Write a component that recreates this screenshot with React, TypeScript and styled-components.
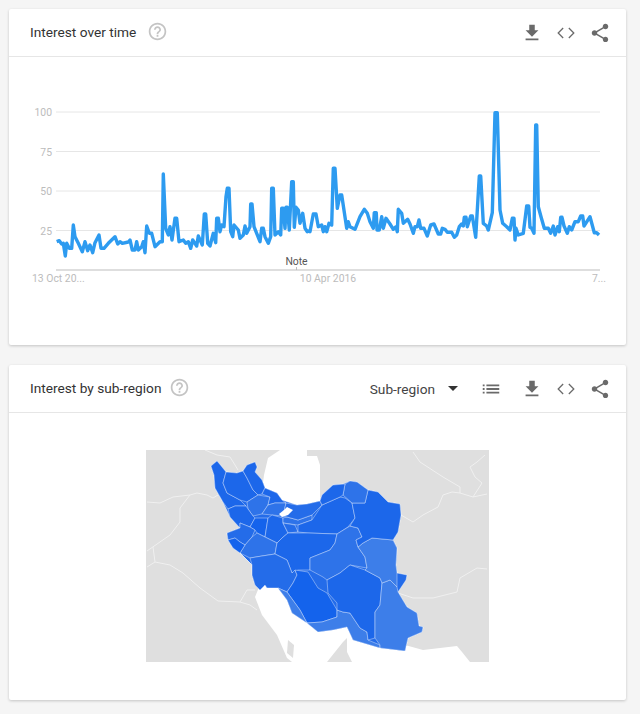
import React from 'react';
import styled, { createGlobalStyle } from 'styled-components';

const GlobalStyle = createGlobalStyle`
  html, body {
    margin: 0;
    background: #f5f5f5;
  }
  body {
    font-family: Roboto, "Liberation Sans", sans-serif;
  }
`;

const Page = styled.div`
  display: flex;
  flex-direction: column;
  gap: 20px;
  width: 617px;
  padding: 9px 14px 14px 9px;
`;

const Card = styled.section<{ $height: number }>`
  height: ${(p) => p.$height}px;
  display: flex;
  flex-direction: column;
  background: #fff;
  border-radius: 2px;
  box-shadow: 0 1px 3px rgba(0, 0, 0, 0.2);
`;

const Header = styled.header`
  flex: none;
  display: flex;
  align-items: center;
  height: 47px;
  padding: 0 9px 0 21px;
  border-bottom: 1px solid #e6e6e6;
`;

const Title = styled.h2`
  margin: 0 0 1px;
  font-size: 13.7px;
  font-weight: 400;
  color: #333;
`;

const Help = styled.svg<{ $gap: number }>`
  width: 21px;
  height: 21px;
  margin-left: ${(p) => p.$gap}px;
  margin-bottom: 2px;
  fill: #c4c4c4;
`;

const Actions = styled.div`
  margin-left: auto;
  display: flex;
  align-items: center;
`;

const Dropdown = styled.div`
  display: flex;
  align-items: center;
  gap: 13px;
  margin-right: 16px;
  font-size: 13.7px;
  color: #444;
`;

const Caret = styled.span`
  width: 0;
  height: 0;
  border-left: 5px solid transparent;
  border-right: 5px solid transparent;
  border-top: 5px solid #333;
`;

const IconButton = styled.button<{ $spaced?: boolean }>`
  display: flex;
  align-items: center;
  justify-content: center;
  width: 34px;
  height: 34px;
  margin-right: ${(p) => (p.$spaced ? 7 : 0)}px;
  padding: 0;
  border: 0;
  background: none;
  svg {
    width: 22px;
    height: 22px;
    fill: #6a6a6a;
  }
`;

const ChartBody = styled.div`
  flex: 1;
`;

const ChartSvg = styled.svg`
  display: block;
  width: 617px;
  height: 288px;
  font-family: Roboto, "Liberation Sans", sans-serif;
  font-size: 10.4px;
`;

const GridLine = styled.line<{ $axis?: boolean }>`
  stroke: ${(p) => (p.$axis ? '#bdbdbd' : '#e6e6e6')};
  stroke-width: 1;
`;

const AxisLabel = styled.text`
  fill: #bcbcbc;
`;

const NoteLabel = styled.text`
  fill: #555;
`;

const TrendLine = styled.polyline`
  fill: none;
  stroke: #2d9bf0;
  stroke-width: 3.4;
  stroke-linejoin: round;
`;

const MapBody = styled.div`
  flex: 1;
  display: flex;
  justify-content: center;
  padding-top: 37px;
`;

const MapSvg = styled.svg`
  display: block;
  width: 343px;
  height: 212px;
  background: #dfdfdf;
  filter: blur(0.35px);
`;

const Border = styled.polyline`
  fill: none;
  stroke: #f0f0f0;
  stroke-width: 1;
`;

const Water = styled.polygon`
  fill: #fff;
`;

const Land = styled.polygon`
  fill: #dfdfdf;
`;

const Region = styled.polygon<{ $fill: string }>`
  fill: ${(p) => p.$fill};
  stroke: rgba(255, 255, 255, 0.38);
  stroke-width: 1;
  stroke-linejoin: round;
`;

// read off the reference, left half then right half of the plot
const leftTrace = [
  [110,425],[118,422],[125,432],[130,430],[136,468],[140,430],[148,445],[155,445],[160,375],[165,410],[175,430],[187,455],[195,425],[203,452],[210,435],[218,458],[225,428],[237,405],[243,445],[252,445],[265,430],[285,410],[293,432],[300,425],[307,430],[325,426],[330,420],[337,450],[345,450],[350,425],[355,450],[365,440],[370,425],[375,458],[380,378],[388,400],[395,400],[405,440],[420,425],[427,425],[430,222],[437,385],[445,405],[450,380],[456,420],[465,355],[470,355],[477,425],[490,420],[497,430],[505,425],[512,445],[518,420],[530,438],[535,408],[547,435],[553,342],[557,342],[563,430],[570,438],[580,400],[587,428],[590,355],[595,355],[600,395],[605,375],[612,380],[618,290],[622,265],[627,265],[632,395],[638,410],[642,375],[655,390],[660,415],[670,405],[675,378],[680,400],[690,380],[692,312],[696,312],[702,380],[720,425],[725,385],[730,385],[735,410],[745,430],[752,410],[755,265],[760,265],[765,405],[775,395],[782,405],[785,325],[790,325],[795,385],[798,322],[802,322],[808,390],[815,245],[820,245],[823,382],[828,322],[835,330],[840,370],[848,340],[855,385],[862,395],[870,392],
];

const rightTrace = [
  [0,395],[10,342],[18,342],[25,380],[35,375],[40,395],[45,380],[50,395],[57,370],[65,375],[70,205],[75,205],[82,325],[90,285],[95,285],[110,385],[115,365],[120,380],[135,388],[150,350],[163,328],[172,340],[180,365],[190,385],[193,338],[199,338],[201,390],[208,390],[215,350],[220,385],[228,355],[240,372],[250,388],[258,380],[262,395],[265,328],[275,340],[280,370],[293,358],[300,372],[310,400],[315,380],[322,380],[327,360],[332,385],[342,385],[352,408],[362,375],[372,372],[385,402],[392,402],[397,385],[405,388],[412,397],[425,397],[433,412],[440,405],[448,380],[455,372],[460,378],[463,352],[468,352],[472,380],[482,348],[487,348],[497,412],[508,228],[512,228],[520,370],[530,378],[535,390],[547,338],[555,38],[562,38],[570,330],[578,370],[590,380],[600,390],[607,355],[612,355],[615,420],[618,385],[625,405],[640,400],[650,318],[656,318],[660,382],[665,385],[672,400],[677,75],[680,75],[685,320],[693,350],[703,385],[715,385],[722,400],[730,378],[735,405],[743,380],[748,395],[752,352],[756,352],[762,378],[772,400],[778,380],[785,390],[795,365],[805,365],[812,348],[818,348],[822,378],[835,358],[840,350],[853,398],[860,398],[867,405],
];

const trendPoints = [
  ...leftTrace.map(([x, y]) => `${(20 + x / 3).toFixed(1)},${(100 + y / 3).toFixed(1)}`),
  ...rightTrace.map(([x, y]) => `${(310 + x / 3).toFixed(1)},${(100 + y / 3).toFixed(1)}`),
].join(' ');

const grid = [
  { label: '100', y: 112 },
  { label: '75', y: 151.5 },
  { label: '50', y: 191 },
  { label: '25', y: 230.5 },
];

const DEEP = '#1463ec';
const DARK = '#1c67ea';
const BASE = '#246ce9';
const MID = '#2e73e9';
const LIGHT = '#3d7ee9';

const iranOutline =
  '211,466 217,461 222,467 226,472 237,473 243,471 247,465 255,462 257,467 255,472 262,480 265,488 277,493 282,500 297,505 307,504 320,501 322,495 333,485 343,484 350,481 357,482 368,490 378,492 388,502 400,504 401,515 398,532 393,540 397,548 396,565 397,573 407,575 406,580 398,592 407,607 417,613 419,626 423,627 422,632 408,638 405,651 380,648 353,640 347,627 333,630 318,632 307,623 292,613 287,600 278,588 267,588 265,585 260,590 255,585 252,575 252,565 240,553 233,548 228,540 227,533 240,528 230,517 223,502 215,488 214,475';

const regions: { fill: string; points: string }[] = [
  // north west
  { fill: DARK, points: '211,466 217,461 222,467 226,472 223,483 227,493 240,500 246,506 235,506 228,509 223,502 215,488 214,475' },
  { fill: DARK, points: '226,472 237,473 243,471 247,478 253,490 258,495 247,502 240,500 227,493 223,483' },
  { fill: DARK, points: '243,471 247,465 255,462 257,467 255,472 262,480 265,488 262,494 258,495 253,490 247,478' },
  { fill: MID, points: '247,502 258,495 270,497 268,505 262,514 253,516 248,509' },
  { fill: DARK, points: '262,494 265,488 277,493 282,500 286,503 275,503 268,505 270,497' },
  { fill: MID, points: '268,505 275,503 286,503 283,516 272,515 262,514' },
  // west
  { fill: DARK, points: '228,509 235,506 246,506 248,509 253,516 255,518 250,527 240,523 240,528 230,517' },
  { fill: DEEP, points: '255,518 268,518 265,537 257,533 255,530 250,527' },
  { fill: BASE, points: '227,533 240,528 240,523 250,527 255,530 252,537 245,545 240,542 235,538 228,540' },
  { fill: DARK, points: '268,518 272,515 283,518 283,523 288,533 282,538 277,543 265,537' },
  { fill: MID, points: '252,537 257,533 265,537 277,543 275,554 262,556 250,558 240,553 245,545' },
  { fill: DEEP, points: '228,540 235,538 240,542 245,545 240,553 252,565 240,553 233,548' },
  // centre
  { fill: MID, points: '283,518 287,517 298,520 312,515 312,520 298,525 283,523' },
  { fill: BASE, points: '283,523 295,525 298,532 288,533' },
  { fill: BASE, points: '283,516 286,503 297,505 307,504 320,501 322,505 312,515 298,520 287,517' },
  { fill: DARK, points: '298,525 312,520 322,505 340,497 345,498 352,503 355,518 348,527 337,534 308,533 298,532' },
  { fill: DARK, points: '288,533 308,533 337,534 335,543 330,550 310,558 310,570 298,570 292,573 287,560 275,554 277,543 282,538' },
  { fill: MID, points: '337,534 350,526 358,528 362,537 356,540 358,547 365,557 367,568 350,565 340,573 327,580 323,577 310,570 310,558 330,550 335,543' },
  // south west and south
  { fill: BASE, points: '252,565 250,558 262,556 275,554 287,560 292,573 295,570 297,575 293,583 287,592 278,588 267,588 265,585 260,590 255,585 252,575' },
  { fill: DEEP, points: '295,570 308,572 318,588 327,593 337,610 337,617 322,622 307,623 300,610 287,592 293,583 297,575' },
  { fill: LIGHT, points: '278,588 287,592 300,610 307,623 322,622 337,617 337,610 343,612 350,613 360,628 367,632 368,640 380,645 380,648 353,640 347,627 333,630 318,632 307,623 292,613 287,600' },
  { fill: DARK, points: '327,580 340,573 350,565 365,570 380,578 382,583 380,605 375,612 375,638 368,640 367,632 360,628 350,613 343,612 337,610 337,603 328,593' },
  // east
  { fill: LIGHT, points: '382,583 390,580 397,587 398,592 407,607 417,613 419,626 423,627 422,632 408,638 405,651 380,648 380,645 375,638 375,612 380,605' },
  { fill: LIGHT, points: '363,543 372,538 393,540 397,548 396,565 397,573 397,587 390,580 382,583 380,578 365,570 367,568 365,557 358,547' },
  { fill: DARK, points: '352,503 365,503 368,490 378,492 388,502 400,504 401,515 398,532 393,540 372,538 363,543 358,547 356,540 362,537 358,528 350,526 355,518' },
  { fill: MID, points: '343,495 345,484 350,481 357,482 368,490 365,503 352,503' },
  { fill: DARK, points: '320,501 322,495 333,485 345,484 343,495 340,497 322,505' },
];

const borders = [
  '147,502 160,503 173,497 190,495 197,493 207,495 213,498 218,495',
  '190,495 180,508 180,522 170,535 147,551',
  '153,547 155,562 147,567',
  '155,562 170,565 183,573 200,588 218,601 240,602 247,590 255,590',
  '240,602 250,605 257,610',
  '205,450 217,455 230,457 235,465 238,470',
  '413,452 420,462 443,477 460,487 460,493 473,497 487,494',
  '473,497 482,483 475,477 470,467 477,462 485,455',
  '401,515 413,522 423,515 438,507 443,495 452,492 460,493',
  '398,593 413,598 433,598 457,592 460,578 477,568 487,569',
];

const DownloadIcon = () => (
  <svg viewBox="0 0 24 24"><path d="M19 9h-4V3H9v6H5l7 7 7-7zM5 18v2h14v-2H5z" /></svg>
);

const CodeIcon = () => (
  <svg viewBox="0 0 24 24">
    <path d="M9.4 16.9L4.5 12l4.9-4.9-1-1L2.5 12l5.9 5.9zM14.6 16.9l4.9-4.9-4.9-4.9 1-1 5.9 5.9-5.9 5.9z" />
  </svg>
);

const ShareIcon = () => (
  <svg viewBox="0 0 24 24">
    <path d="M18 16.08c-.76 0-1.44.3-1.96.77L8.91 12.7c.05-.23.09-.46.09-.7s-.04-.47-.09-.7l7.05-4.11c.54.5 1.25.81 2.04.81 1.66 0 3-1.34 3-3s-1.34-3-3-3-3 1.34-3 3c0 .24.04.47.09.7L8.04 9.81C7.5 9.31 6.79 9 6 9c-1.66 0-3 1.34-3 3s1.34 3 3 3c.79 0 1.5-.31 2.04-.81l7.12 4.16c-.05.21-.08.43-.08.65 0 1.61 1.31 2.92 2.92 2.92 1.61 0 2.92-1.31 2.92-2.92s-1.31-2.92-2.92-2.92z" />
  </svg>
);

const ListIcon = () => (
  <svg viewBox="0 0 24 24">
    <path d="M3 13h2v-2H3v2zm0 4h2v-2H3v2zm0-8h2V7H3v2zm4 4h14v-2H7v2zm0 4h14v-2H7v2zM7 7v2h14V7H7z" />
  </svg>
);

const HelpIcon: React.FC<{ gap: number }> = ({ gap }) => (
  <Help $gap={gap} viewBox="0 0 24 24">
    <path d="M11 18h2v-2h-2v2zm1-16C6.48 2 2 6.48 2 12s4.48 10 10 10 10-4.48 10-10S17.52 2 12 2zm0 18c-4.41 0-8-3.59-8-8s3.59-8 8-8 8 3.59 8 8-3.59 8-8 8zm0-14c-2.21 0-4 1.79-4 4h2c0-1.1.9-2 2-2s2 .9 2 2c0 2-3 1.75-3 5h2c0-2.25 3-2.5 3-5 0-2.21-1.79-4-4-4z" />
  </Help>
);

const CommonActions = () => (
  <>
    <IconButton><DownloadIcon /></IconButton>
    <IconButton><CodeIcon /></IconButton>
    <IconButton><ShareIcon /></IconButton>
  </>
);

const TrendChart = () => (
  <ChartSvg viewBox="9 57 617 288">
    {grid.map((g) => (
      <React.Fragment key={g.label}>
        <GridLine x1={56} x2={600} y1={g.y} y2={g.y} />
        <AxisLabel x={52} y={g.y + 4} textAnchor="end">{g.label}</AxisLabel>
      </React.Fragment>
    ))}
    <GridLine $axis x1={56} x2={600} y1={270} y2={270} />
    <GridLine $axis x1={296.5} x2={296.5} y1={267} y2={270} />
    <NoteLabel x={296.5} y={265} textAnchor="middle">Note</NoteLabel>
    <AxisLabel x={32} y={282}>13 Oct 20...</AxisLabel>
    <AxisLabel x={328} y={282} textAnchor="middle">10 Apr 2016</AxisLabel>
    <AxisLabel x={592} y={282}>7...</AxisLabel>
    <TrendLine points={trendPoints} />
  </ChartSvg>
);

const IranMap = () => (
  <MapSvg viewBox="146 450 343 212">
    {borders.map((b) => <Border key={b} points={b} />)}
    <Water points="280,450 307,450 307,456 317,456 320,465 320,510 280,510 262,490 264,475 268,458" />
    <Water points="255,597 262,580 290,590 320,620 360,625 405,645 423,650 457,646 462,652 470,662 292,662 287,658 277,635 262,615" />
    <Land points="288,640 294,645 293,658 287,653" />
    <Land points="327,662 343,642 347,638 347,652 352,662" />
    <Region $fill={BASE} points={iranOutline} />
    {regions.map((r) => <Region key={r.points} $fill={r.fill} points={r.points} />)}
    <Water points="279,514 284,510 287,507 293,510 288,515 282,517" />
  </MapSvg>
);

export default function App() {
  return (
    <>
      <GlobalStyle />
      <Page>
        <Card $height={336}>
          <Header>
            <Title>Interest over time</Title>
            <HelpIcon gap={11} />
            <Actions>
              <CommonActions />
            </Actions>
          </Header>
          <ChartBody>
            <TrendChart />
          </ChartBody>
        </Card>
        <Card $height={335}>
          <Header>
            <Title>Interest by sub-region</Title>
            <HelpIcon gap={8} />
            <Actions>
              <Dropdown>
                Sub-region
                <Caret />
              </Dropdown>
              <IconButton $spaced><ListIcon /></IconButton>
              <CommonActions />
            </Actions>
          </Header>
          <MapBody>
            <IranMap />
          </MapBody>
        </Card>
      </Page>
    </>
  );
}
